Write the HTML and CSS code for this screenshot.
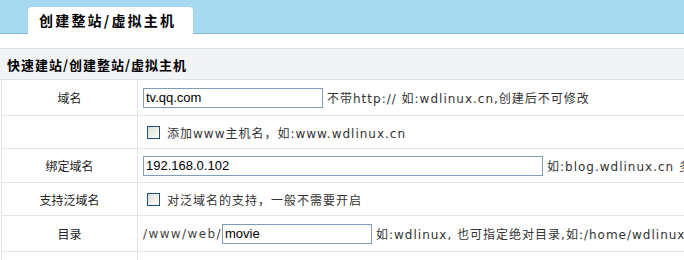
FILE: index.html
```html
<!DOCTYPE html>
<html lang="zh-CN">
<head>
<meta charset="utf-8">
<title>创建整站/虚拟主机</title>
<link rel="stylesheet" href="styles.css">
</head>
<body>
<div class="topbar">
  <div class="tab">创建整站/虚拟主机</div>
</div>
<div class="panel">
  <div class="panel-head">快速建站/创建整站/虚拟主机</div>
  <div class="form">
    <div class="row r1">
      <div class="label">域名</div>
      <div class="field">
        <input class="txt w180" type="text" value="tv.qq.com">
        <span class="hint">不带http:// 如:wdlinux.cn,创建后不可修改</span>
      </div>
    </div>
    <div class="row r2">
      <div class="label"></div>
      <div class="field">
        <span class="check"></span>
        <span class="hint">添加www主机名，如:www.wdlinux.cn</span>
      </div>
    </div>
    <div class="row r3">
      <div class="label">绑定域名</div>
      <div class="field">
        <input class="txt w400" type="text" value="192.168.0.102">
        <span class="hint">如:blog.wdlinux.cn 多个域名用空格隔开</span>
      </div>
    </div>
    <div class="row r4">
      <div class="label">支持泛域名</div>
      <div class="field">
        <span class="check"></span>
        <span class="hint">对泛域名的支持，一般不需要开启</span>
      </div>
    </div>
    <div class="row r5">
      <div class="label">目录</div>
      <div class="field">
        <span class="prefix">/www/web/</span><input class="txt w150" type="text" value="movie">
        <span class="hint">如:wdlinux, 也可指定绝对目录,如:/home/wdlinux.cn</span>
      </div>
    </div>
    <div class="row r6">
      <div class="label"></div>
      <div class="field">
        <input class="txt w180" type="text" value="">
      </div>
    </div>
  </div>
</div>
</body>
</html>
```
FILE: styles.css
```css
html, body {
  margin: 0;
  padding: 0;
  background: #ffffff;
  font-family: "DejaVu Sans", "Noto Sans CJK SC", sans-serif;
  font-size: 12px;
  color: #333333;
  overflow: hidden;
}

.topbar {
  height: 33px;
  background: #a6d9ef;
  border-bottom: 1px solid #7fbcd9;
  display: flex;
  align-items: flex-end;
  padding-left: 28px;
}

.tab {
  width: 165px;
  height: 27px;
  margin-bottom: -1px;
  background: #ffffff;
  border-radius: 4px 4px 0 0;
  box-sizing: border-box;
  padding-left: 11px;
  font-family: "Noto Sans CJK SC", sans-serif;
  font-weight: bold;
  font-size: 14px;
  letter-spacing: 2.2px;
  line-height: 26px;
  color: #000000;
}

.panel {
  margin-top: 14px;
}

.panel-head {
  height: 30px;
  border-top: 1px solid #e0e2e6;
  border-bottom: 1px solid #e0e2e6;
  background: #f2f3f5;
  padding-left: 7px;
  display: flex;
  align-items: center;
  font-family: "Noto Sans CJK SC", sans-serif;
  font-weight: bold;
  font-size: 13px;
  letter-spacing: 1px;
  color: #000000;
}

.form {
  margin-left: 1px;
  border-left: 1px solid #e3e5e9;
}

.row {
  display: grid;
  grid-template-columns: 136px 1fr;
  border-bottom: 1px solid #e3e5e9;
  box-sizing: border-box;
}

.r1 { height: 36px; }
.r2 { height: 33px; }
.r3 { height: 34px; }
.r4 { height: 33px; }
.r5 { height: 36px; }
.r6 { height: 36px; }

.label {
  border-right: 1px solid #e3e5e9;
  display: flex;
  align-items: center;
  justify-content: center;
  font-family: "Noto Sans CJK SC", sans-serif;
  font-size: 12px;
  color: #222222;
}

.field {
  display: flex;
  align-items: center;
  padding-left: 5px;
  white-space: nowrap;
  overflow: hidden;
  min-width: 0;
}

.txt {
  flex-shrink: 0;
  box-sizing: border-box;
  height: 20px;
  margin: 0;
  border: 1px solid #7f9db9;
  padding: 0 2px;
  font-family: "Liberation Sans", Arial, sans-serif;
  font-size: 13px;
  color: #000000;
  background: #ffffff;
  outline: none;
}

.w180 { width: 180px; }
.w400 { width: 400px; }
.w150 { width: 150px; }

.hint {
  flex-shrink: 0;
  margin-left: 4px;
  color: #333333;
  letter-spacing: 1px;
}

.prefix {
  flex-shrink: 0;
  color: #444444;
  letter-spacing: 1.4px;
}

.check {
  flex-shrink: 0;
  box-sizing: border-box;
  width: 13px;
  height: 13px;
  margin-left: 4px;
  margin-right: 3px;
  border: 1px solid #1c5180;
  background: linear-gradient(135deg, #dcdcd7 0%, #f4f4f2 70%, #ffffff 100%);
}
```
